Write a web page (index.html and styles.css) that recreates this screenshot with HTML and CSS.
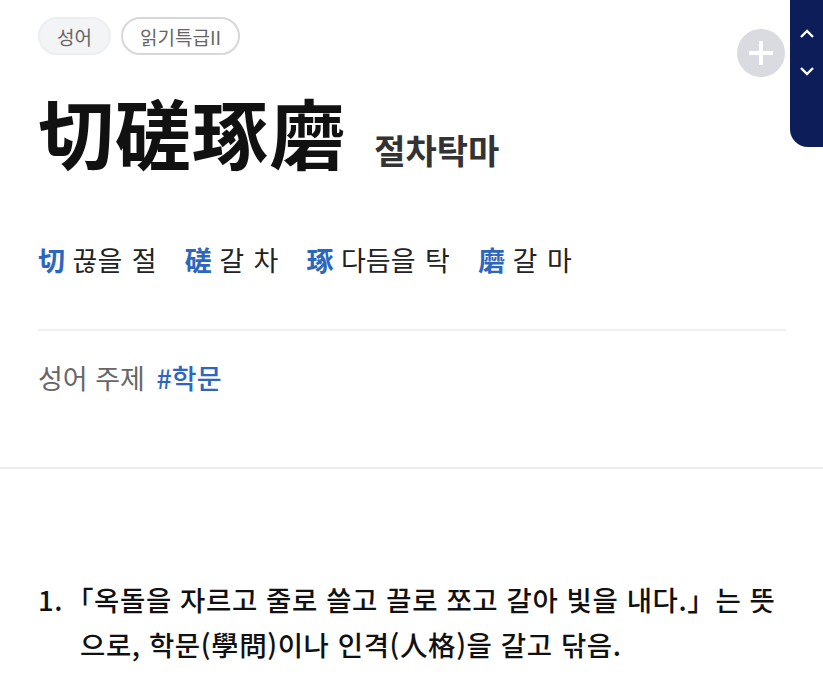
FILE: index.html
```html
<!DOCTYPE html>
<html lang="ko">
<head>
  <meta charset="UTF-8">
  <title>切磋琢磨</title>
  <link rel="stylesheet" href="styles.css">
</head>
<body>
  <div class="side-nav">
    <svg width="18" height="12" viewBox="0 0 18 12"><path d="M3 9 L9 3 L15 9" fill="none" stroke="#fff" stroke-width="2.4"/></svg>
    <svg width="18" height="12" viewBox="0 0 18 12"><path d="M3 3 L9 9 L15 3" fill="none" stroke="#fff" stroke-width="2.4"/></svg>
  </div>

  <section class="entry">
    <div class="tags">
      <span class="tag tag-fill">성어</span>
      <span class="tag">읽기특급II</span>
      <button class="add-btn">
        <svg width="48" height="48" viewBox="0 0 48 48"><circle cx="24" cy="24" r="24" fill="#d9dbe0"/><path d="M24 12 V36 M12 24 H36" stroke="#fff" stroke-width="4"/></svg>
      </button>
    </div>

    <h1 class="title">切磋琢磨 <span class="reading">절차탁마</span></h1>

    <ul class="hanja">
      <li><b>切</b> 끊을 절</li>
      <li><b>磋</b> 갈 차</li>
      <li><b>琢</b> 다듬을 탁</li>
      <li><b>磨</b> 갈 마</li>
    </ul>

    <p class="theme">성어 주제 <a href="#">#학문</a></p>
  </section>

  <ol class="meanings">
    <li><span class="num">1.</span><span class="text">「옥돌을 자르고 줄로 쓸고 끌로 쪼고 갈아 빛을 내다.」는 뜻으로, 학문(學問)이나 인격(人格)을 갈고 닦음.</span></li>
  </ol>
</body>
</html>
```

FILE: styles.css
```css
body {
  margin: 0;
  font-family: "Noto Sans CJK KR", "Noto Sans", sans-serif;
  background: #fff;
  color: #111;
}

.side-nav {
  position: fixed;
  top: 0;
  right: 0;
  width: 33px;
  height: 147px;
  background: #0d1d5a;
  border-bottom-left-radius: 18px;
  display: flex;
  flex-direction: column;
  align-items: center;
  gap: 25px;
  padding-top: 28px;
  box-sizing: border-box;
}

.entry {
  padding: 17px 37px 0 38px;
  border-bottom: 2px solid #ebebeb;
}

.tags {
  display: flex;
  align-items: center;
  gap: 10px;
  height: 38px;
}

.tag {
  height: 38px;
  box-sizing: border-box;
  padding: 0 17px;
  border: 2px solid #d5d7db;
  border-radius: 19px;
  font-size: 19px;
  color: #666;
  display: flex;
  align-items: center;
}

.tag-fill {
  background: #f3f4f6;
  border-color: #eceef1;
}

.add-btn {
  margin-left: auto;
  margin-right: 1px;
  margin-top: 33px;
  border: none;
  background: none;
  padding: 0;
  width: 48px;
  height: 48px;
}

.title {
  margin: 26px 0 0;
  font-size: 76px;
  font-weight: 700;
  line-height: 100px;
  letter-spacing: 1px;
}

.reading {
  font-size: 34px;
  font-weight: 700;
  color: #333;
  margin-left: 6px;
  letter-spacing: 0;
}

.hanja {
  list-style: none;
  margin: 40px 0 0;
  padding: 0 0 50px;
  display: flex;
  gap: 28px;
  font-size: 27px;
  word-spacing: 2px;
  color: #222;
  border-bottom: 2px solid #eeeff0;
}

.hanja b {
  color: #2d66be;
  margin-right: -2px;
}

.theme {
  margin: 0;
  padding: 27px 0 70px;
  font-size: 27px;
  color: #666;
}

.theme a {
  color: #2d66be;
  text-decoration: none;
  font-weight: 500;
  margin-left: 4px;
}

.meanings {
  list-style: none;
  margin: 0;
  padding: 108px 38px 0;
}

.meanings li {
  display: flex;
  font-size: 27.5px;
  font-weight: 500;
  line-height: 45px;
  letter-spacing: 0.6px;
  color: #111;
}

.num {
  width: 28px;
  flex: none;
}

.text {
  padding-left: 14px;
  text-indent: -14px;
}
```
